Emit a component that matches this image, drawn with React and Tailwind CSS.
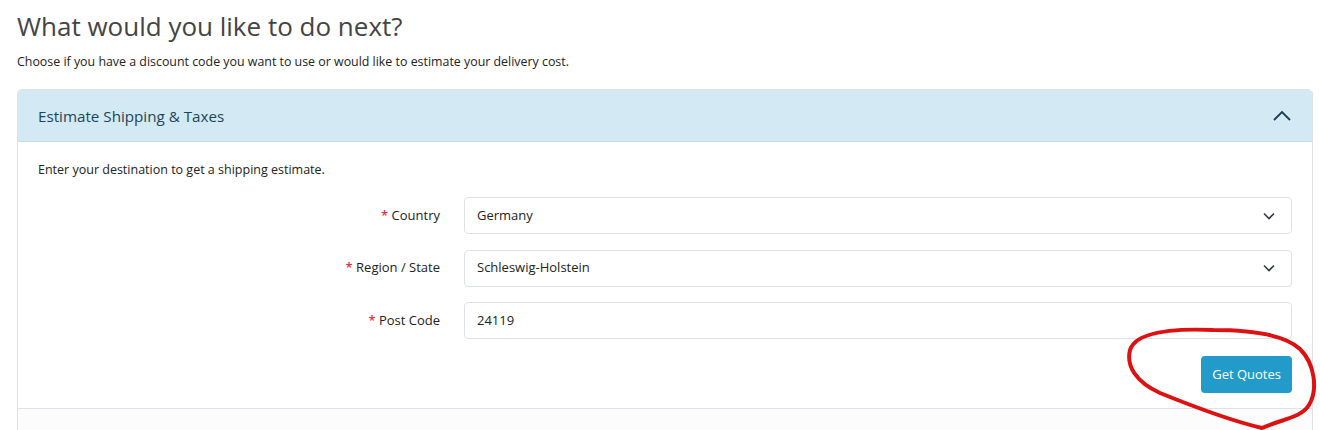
import React from 'react';

const font = { fontFamily: '"Open Sans", "Noto Sans", sans-serif' };

const ChevronDown = () => (
  <svg width="12" height="8" viewBox="0 0 12 8" fill="none" stroke="#343a40" strokeWidth="1.6">
    <path d="M1 1.5l5 5 5-5" />
  </svg>
);

const ChevronUp = () => (
  <svg width="18" height="11" viewBox="0 0 18 11" fill="none" stroke="#1c3d4e" strokeWidth="1.8">
    <path d="M1 10L9 2l8 8" />
  </svg>
);

const Field = ({ label, value, select }) => (
  <div className="flex items-center h-[37px]">
    <label className="w-[402px] text-right text-[13px] text-[#222]">
      <span className="text-[#dc3545] font-semibold">*</span> {label}
    </label>
    <div className="ml-[24px] flex-1 h-[37px] border border-[#dee2e6] rounded-[4px] flex items-center justify-between pl-[12px] pr-[16px] text-[13px] text-[#222]">
      <span>{value}</span>
      {select && <ChevronDown />}
    </div>
  </div>
);

export default function App() {
  return (
    <div className="relative w-[1320px] h-[430px] overflow-hidden bg-white" style={font}>
      <div className="pl-[17px] pr-[7px]">
        <h1 className="pt-[9px] text-[26px] leading-[34px] text-[#444]">What would you like to do next?</h1>
        <p className="mt-[10px] text-[12.4px] leading-[18px] text-[#222]">
          Choose if you have a discount code you want to use or would like to estimate your delivery cost.
        </p>
        <div className="mt-[18px] border border-[#dee2e6] rounded-t-[5px]">
          <div className="h-[52px] bg-[#d3eaf4] flex items-center justify-between pl-[20px] pr-[21px] rounded-t-[4px] border-b border-[#c5dde8]">
            <span className="pt-[2px] text-[15.2px] text-[#1c4558]">Estimate Shipping &amp; Taxes</span>
            <ChevronUp />
          </div>
          <div className="px-[20px] pt-[19px] pb-[15px]">
            <p className="text-[12.5px] leading-[18px] text-[#222]">Enter your destination to get a shipping estimate.</p>
            <div className="mt-[18px] flex flex-col gap-[15.5px]">
              <Field label="Country" value="Germany" select />
              <Field label="Region / State" value="Schleswig-Holstein" select />
              <Field label="Post Code" value="24119" />
            </div>
            <div className="mt-[17px] flex justify-end">
              <button className="h-[37px] px-[11px] rounded-[4px] bg-[#239bca] text-white text-[13px]">Get Quotes</button>
            </div>
          </div>
          <div className="h-[40px] border-t border-[#dee2e6] bg-[#fcfcfc]" />
        </div>
      </div>
      <svg className="absolute left-0 top-0 pointer-events-none" width="1320" height="430" viewBox="0 0 1320 430" fill="none">
        <path
          d="M1213 330 C1250 330 1284 334 1300 349 C1315 364 1318 390 1309 405 C1301 418 1282 419 1262 428 C1232 421 1192 406 1160 393 C1136 382 1126 366 1130 350 C1135 334 1165 328 1213 330"
          stroke="#dc1212"
          strokeWidth="4"
          strokeLinecap="round"
          strokeLinejoin="round"
        />
      </svg>
    </div>
  );
}
